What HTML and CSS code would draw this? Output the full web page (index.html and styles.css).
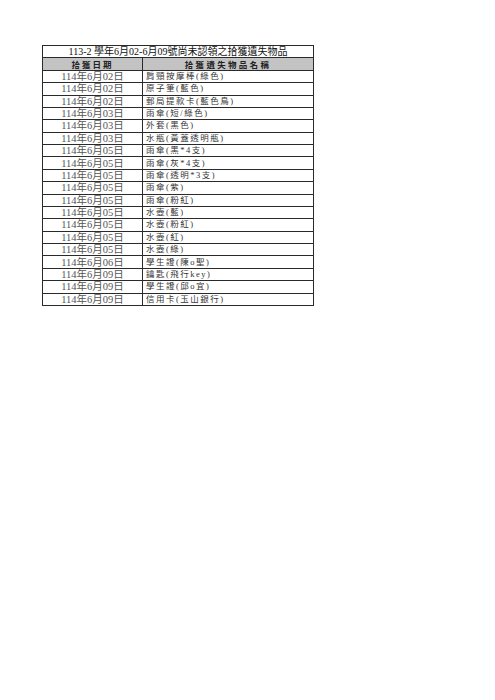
FILE: index.html
```html
<!DOCTYPE html>
<html lang="zh-Hant">
<head>
<meta charset="utf-8">
<title>拾獲遺失物品</title>
<link rel="stylesheet" href="styles.css">
</head>
<body>
<table class="lost">
  <colgroup><col class="c-date"><col class="c-name"></colgroup>
  <thead>
    <tr class="title-row"><th colspan="2">113-2 學年6月02-6月09號尚未認領之拾獲遺失物品</th></tr>
    <tr class="head-row"><th class="h-date">拾獲日期</th><th class="h-name">拾獲遺失物品名稱</th></tr>
  </thead>
  <tbody>
    <tr><td class="date">114年6月02日</td><td class="name">肩頸按摩棒(綠色)</td></tr>
    <tr><td class="date">114年6月02日</td><td class="name">原子筆(藍色)</td></tr>
    <tr><td class="date">114年6月02日</td><td class="name">郵局提款卡(藍色鳥)</td></tr>
    <tr><td class="date">114年6月03日</td><td class="name">雨傘(短/綠色)</td></tr>
    <tr><td class="date">114年6月03日</td><td class="name">外套(黑色)</td></tr>
    <tr><td class="date">114年6月03日</td><td class="name">水瓶(黃蓋透明瓶)</td></tr>
    <tr><td class="date">114年6月05日</td><td class="name">雨傘(黑*4支)</td></tr>
    <tr><td class="date">114年6月05日</td><td class="name">雨傘(灰*4支)</td></tr>
    <tr><td class="date">114年6月05日</td><td class="name">雨傘(透明*3支)</td></tr>
    <tr><td class="date">114年6月05日</td><td class="name">雨傘(紫)</td></tr>
    <tr><td class="date">114年6月05日</td><td class="name">雨傘(粉紅)</td></tr>
    <tr><td class="date">114年6月05日</td><td class="name">水壺(藍)</td></tr>
    <tr><td class="date">114年6月05日</td><td class="name">水壺(粉紅)</td></tr>
    <tr><td class="date">114年6月05日</td><td class="name">水壺(紅)</td></tr>
    <tr><td class="date">114年6月05日</td><td class="name">水壺(綠)</td></tr>
    <tr><td class="date">114年6月06日</td><td class="name">學生證(陳o聖)</td></tr>
    <tr><td class="date">114年6月09日</td><td class="name">鑰匙(飛行key)</td></tr>
    <tr><td class="date">114年6月09日</td><td class="name">學生證(邱o宜)</td></tr>
    <tr><td class="date">114年6月09日</td><td class="name">信用卡(玉山銀行)</td></tr>
  </tbody>
</table>
</body>
</html>
```
FILE: styles.css
```css
html, body {
  margin: 0;
  padding: 0;
  background: #ffffff;
}
body {
  padding: 45px 0 0 42px;
  font-family: "Liberation Serif", "Noto Sans CJK TC", serif;
}
.lost {
  border-collapse: collapse;
  table-layout: fixed;
  width: 271px;
  border: 1.5px solid #222;
}
.c-date { width: 100px; }
.c-name { width: 171px; }
.lost tr {
  height: 12.38px;
}
.lost th, .lost td {
  border: 1px solid #2a2a2a;
  padding: 0;
  height: auto;
  line-height: 9px;
  white-space: nowrap;
  overflow: hidden;
  vertical-align: middle;
}
.title-row th {
  font-weight: normal;
  font-size: 10px;
  color: #111;
  text-align: center;
}
.head-row th {
  background: #c3c3c3;
  font-family: "Noto Sans CJK TC", sans-serif;
  font-weight: bold;
  font-size: 8.5px;
  color: #222;
  text-align: center;
}
.h-date { letter-spacing: 2px; }
.h-name { letter-spacing: 2.3px; }
.date {
  text-align: center;
  font-size: 10.5px;
  color: #555;
}
.name {
  text-align: left;
  padding-left: 3px !important;
  font-size: 8.5px;
  letter-spacing: 1.5px;
  color: #333;
}
```
